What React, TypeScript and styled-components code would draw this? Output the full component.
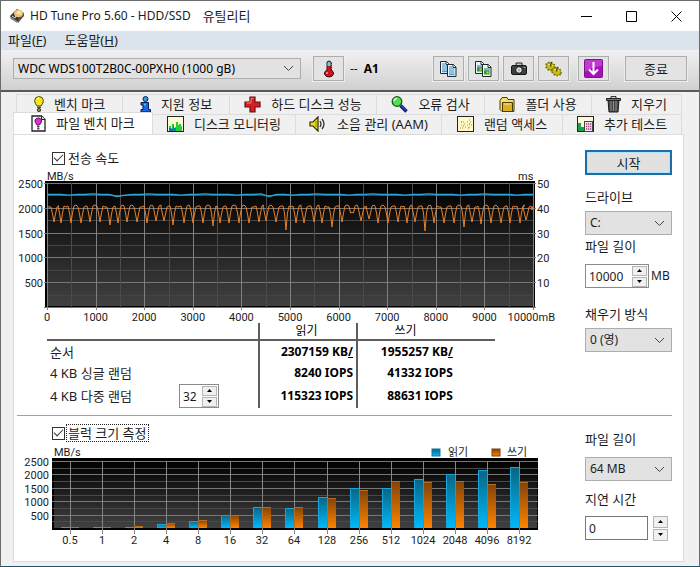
import React, { useId, useRef } from 'react';
import styled, { createGlobalStyle, css } from 'styled-components';

const Global = createGlobalStyle`
  *, *::before, *::after { box-sizing: border-box; }
  html, body { margin: 0; background: #f0f0f0; }
  body, button, input, select, table {
    font-family: "Noto Sans", "Noto Sans CJK KR", sans-serif;
    font-size: 12px;
    line-height: 16px;
    color: #1c1c1c;
  }
  svg { display: block; flex: none; }
`;

const Window = styled.main`
  min-height: 100vh;
  display: flex;
  flex-direction: column;
  background: #f0f0f0;
  border: 1px solid #6a6b6d;
  border-bottom-color: #245166;
`;

const TitleBar = styled.header`
  display: flex;
  align-items: center;
  height: 30px;
  padding-left: 8px;
  background: #fff;
`;

const Title = styled.h1`
  display: flex;
  gap: 12px;
  flex: 1;
  margin: 0 0 0 5px;
  font-size: 12px;
  font-weight: 400;
  white-space: nowrap;
  span { font-size: 13px; }
`;

const CaptionButton = styled.button`
  display: grid;
  place-items: center;
  width: 45px;
  height: 29px;
  padding: 0;
  border: 0;
  background: none;
`;

const MenuBar = styled.nav`
  display: flex;
  gap: 18px;
  height: 19px;
  padding: 0 7px;
  background: #dbe3ec;
`;

const MenuItem = styled.button`
  padding: 0;
  border: 0;
  background: none;
  font-size: 13px;
  line-height: 19px;
`;

const Toolbar = styled.div`
  display: flex;
  align-items: center;
  height: 42px;
  padding: 0 12px 3px;
  background: linear-gradient(#f1f1f1, #d0d0d0);
  border-bottom: 2px solid #58595b;
`;

const ToolButton = styled.button<{ $wide?: boolean }>`
  display: grid;
  place-items: center;
  width: ${(p) => (p.$wide ? 62 : 31)}px;
  height: 25px;
  padding: 0;
  background: #e3e3e3;
  border: 1px solid #adadad;
  outline: 1px solid #ededed;
  font-size: 13px;
`;

const ToolGroup = styled.div`
  display: flex;
  gap: 4px;
  margin-left: auto;
`;

const ToolActions = styled.div`
  display: flex;
  gap: 16px;
  margin-left: 9px;
`;

const Temperature = styled.output`
  margin-left: 6px;
  b { margin-left: 6px; color: #000; }
`;

const SelectBox = styled.div<{ $variant: 'device' | 'field' }>`
  display: grid;
  grid-template-columns: 1fr 18px;
  align-items: center;
  > select {
    grid-area: 1 / 1 / 2 / 3;
    appearance: none;
    width: 100%;
    height: 24px;
    padding: 0 18px 0 4px;
    border: 1px solid #adadad;
    border-radius: 0;
    background: #e2e2e2;
  }
  > svg { grid-area: 1 / 2; pointer-events: none; }
  ${(p) =>
    p.$variant === 'device' &&
    css`
      flex: 0 1 288px;
      margin-right: 12px;
      > select { height: 21px; color: #000; }
    `}
`;

const Body = styled.div`
  flex: 1;
  display: flex;
  flex-direction: column;
  padding: 2px 15px 4px 12px;
`;

const TabRow = styled.div<{ $columns: string; $inset?: boolean }>`
  display: grid;
  grid-template-columns: ${(p) => p.$columns};
  margin: ${(p) => (p.$inset ? '0 2px 0 3px' : '0 2px 0 0')};
`;

const Tab = styled.button<{ $active?: boolean }>`
  display: flex;
  align-items: center;
  justify-content: center;
  gap: 10px;
  height: ${(p) => (p.$active ? 22 : 20)}px;
  margin-top: ${(p) => (p.$active ? '-2px' : '0')};
  padding: 0 0 1px;
  border: 0;
  border-top: 1px solid #dcdcdc;
  border-right: 1px solid #dcdcdc;
  background: ${(p) => (p.$active ? '#fff' : '#f0f0f0')};
  font-size: 13px;
  line-height: 18px;
  white-space: nowrap;
  &:first-child { border-left: 1px solid #dcdcdc; }
`;

const Panel = styled.section`
  flex: 1;
  padding: 0 11px 8px 3px;
  background: #fff;
  border: 1px solid #dcdcdc;
`;

const Section = styled.section<{ $divided?: boolean }>`
  display: grid;
  grid-template-columns: minmax(0, 1fr) 87px;
  gap: 15px;
  padding-top: ${(p) => (p.$divided ? 9 : 15)}px;
  border-top: ${(p) => (p.$divided ? '1px solid #a2a2a2' : '0')};
  & + & { margin-top: 7px; }
`;

const Check = styled.label<{ $focused?: boolean }>`
  display: flex;
  align-items: center;
  gap: 1px;
  width: max-content;
  height: 16px;
  margin: 0 0 2px 35px;
  font-size: 13px;
  input {
    appearance: none;
    display: grid;
    place-items: center;
    width: 13px;
    height: 13px;
    margin: 0;
    border: 1px solid #333;
    background: #fff;
  }
  input:checked::after {
    content: '';
    width: 9px;
    height: 5px;
    margin-bottom: 3px;
    border: solid #333;
    border-width: 0 0 1px 1px;
    transform: rotate(-45deg);
  }
  span {
    padding: 0 1px;
    border: 1px dotted ${(p) => (p.$focused ? '#222' : 'transparent')};
  }
`;

const ChartSvg = styled.svg`
  width: 100%;
  height: auto;
  text { font-family: Roboto, "Noto Sans CJK KR", sans-serif; font-size: 11px; fill: #1c1c1c; }
`;

const Results = styled.table`
  width: 81%;
  margin-left: 30px;
  border-collapse: collapse;
  table-layout: fixed;
  th, td { height: 22px; padding: 0 3px 0 0; font-weight: 400; text-align: right; color: #000; }
  thead th { height: 17px; text-align: center; border-bottom: 2px solid #5c5d5c; }
  tbody th { text-align: left; padding-left: 3px; font-size: 12px; color: #222; }
  td { font-weight: 700; white-space: nowrap; }
  th:nth-child(2), td:nth-child(2) { border-left: 2px solid #5c5d5c; border-right: 2px solid #5c5d5c; }
  th:nth-child(3), td:nth-child(3) { padding-right: 42px; }
  col:nth-child(1) { width: 212px; }
  col:nth-child(2) { width: 98px; }
`;

const RowLabel = styled.div`
  display: flex;
  align-items: center;
  justify-content: space-between;
  padding-right: 36px;
  font-size: 13px;
`;

const Side = styled.div`
  display: flex;
  flex-direction: column;
`;

const StartButton = styled.button`
  height: 25px;
  padding: 0;
  border: 2px solid #1c6ea8;
  outline: 1px solid #b5e3f6;
  outline-offset: -3px;
  background: #e1e1e1;
  font-size: 13px;
`;

const FieldLabel = styled.label<{ $top: number; $bottom: number }>`
  margin: ${(p) => p.$top}px 0 ${(p) => p.$bottom}px;
  font-size: 13px;
  line-height: 16px;
`;

const UnitRow = styled.div`
  display: flex;
  align-items: center;
  gap: 2px;
  font-size: 12px;
`;

const SpinBox = styled.span<{ $width: number; $apart?: boolean }>`
  display: inline-flex;
  align-items: center;
  gap: ${(p) => (p.$apart ? 5 : 0)}px;
  height: 24px;
  padding-right: 1px;
  border: ${(p) => (p.$apart ? '0' : '1px solid #8a8a8a')};
  background: #fff;
  input {
    appearance: textfield;
    width: ${(p) => p.$width}px;
    height: ${(p) => (p.$apart ? '24px' : '20px')};
    padding: 0 3px;
    border: ${(p) => (p.$apart ? '1px solid #777' : '0')};
    background: none;
  }
  input::-webkit-inner-spin-button { appearance: none; margin: 0; }
  button { height: ${(p) => (p.$apart ? 12 : 10)}px; }
`;

const SpinButtons = styled.span`
  display: grid;
  gap: 1px;
`;

const SpinButton = styled.button`
  display: grid;
  place-items: center;
  width: 15px;
  padding: 0;
  border: 1px solid #b5b5b5;
  background: #f0f0f0;
`;

function Chevron() {
  return (
    <svg width="11" height="7" viewBox="0 0 11 7" fill="none" stroke="#444">
      <path d="M1 1l4.500 4.500L10 1" />
    </svg>
  );
}

function Select({ id, value, label, variant = 'field' }: { id?: string; value: string; label?: string; variant?: 'device' | 'field' }) {
  return (
    <SelectBox $variant={variant}>
      <select id={id} aria-label={label} defaultValue={value}>
        <option>{value}</option>
      </select>
      <Chevron />
    </SelectBox>
  );
}

function Spin({ id, value, width, label, apart }: { id?: string; value: number; width: number; label?: string; apart?: boolean }) {
  const field = useRef<HTMLInputElement>(null);
  return (
    <SpinBox $width={width} $apart={apart}>
      <input ref={field} id={id} type="number" aria-label={label} defaultValue={value} />
      <SpinButtons>
        <SpinButton type="button" aria-label="증가" onClick={() => field.current?.stepUp()}>
          <svg width="5" height="3" viewBox="0 0 5 3"><path d="M2.5 0L5 3H0z" /></svg>
        </SpinButton>
        <SpinButton type="button" aria-label="감소" onClick={() => field.current?.stepDown()}>
          <svg width="5" height="3" viewBox="0 0 5 3"><path d="M0 0h5L2.5 3z" /></svg>
        </SpinButton>
      </SpinButtons>
    </SpinBox>
  );
}

/* ---- icons ---- */

const DriveIcon = () => (
  <svg width="16" height="16" viewBox="0 0 16 16">
    <path d="M1 8L8 1l7 4-6 9-7-3z" fill="#3a3632" />
    <path d="M1 8l7 5v2l-6-4z" fill="#8d8d8d" />
    <path d="M8 13l7-8v3l-6 7z" fill="#5d5146" />
    <ellipse cx="9.5" cy="5.5" rx="4.5" ry="3.8" fill="#eec27a" />
    <ellipse cx="10" cy="4.8" rx="2.6" ry="1.8" fill="#fbe3b0" />
    <path d="M3 8l3 2 1-2" stroke="#ddd" fill="none" />
  </svg>
);

const ThermometerIcon = () => (
  <svg width="12" height="18" viewBox="0 0 12 18">
    <path d="M4 2q2-2 4 0v8q3 1.500 2.500 4Q9.500 17 6 17T1.500 14Q1 11.500 4 10z" fill="#d3131c" stroke="#3b1010" />
    <path d="M4.500 2.500q1.500-1.500 3 0V6h-3z" fill="#59d5e5" />
    <path d="M8.500 3v7" stroke="#222" strokeDasharray="1 1" />
    <path d="M4 12v2" stroke="#ff9c9c" strokeWidth="1.500" />
  </svg>
);

const CopyIcon = ({ picture }: { picture?: boolean }) => (
  <svg width="17" height="16" viewBox="0 0 17 16">
    {[[0.5, 0.5], [7.5, 3.5]].map(([x, y]) => (
      <g key={x} transform={`translate(${x} ${y})`}>
        <path d="M0 0h6l2.500 2.500V12H0z" fill="#eef6fb" stroke="#20262c" />
        <path d="M5.500 0v3h3" fill="#fff" stroke="#20262c" />
        {picture ? (
          <><path d="M1.500 4h5.500v6H1.500z" fill="#2f9a21" /><path d="M1.500 4h5.500v2H1.500z" fill="#6cb9dd" /><path d="M4 7h2v2H4z" fill="#b4e035" /></>
        ) : (
          <path d="M1.500 2.500h3M1.500 4.500h5.500M1.500 6.500h5.500M1.500 8.500h5.500M1.500 10.200h5.500" stroke="#2b8ecb" />
        )}
      </g>
    ))}
  </svg>
);

const CameraIcon = () => (
  <svg width="16" height="14" viewBox="0 0 16 14">
    <path d="M5 3.500V1h6v2.500" fill="#ccc" stroke="#222" />
    <rect x=".5" y="3.500" width="15" height="9" rx="1.500" fill="#3b4140" stroke="#161616" />
    <circle cx="8" cy="8" r="3.300" fill="#e5ebe8" stroke="#111" />
    <circle cx="8" cy="8" r="1.500" fill="#9fb8b1" />
    <path d="M12.500 5.500h2" stroke="#5bd35b" />
  </svg>
);

const GearsIcon = () => (
  <svg width="17" height="16" viewBox="0 0 17 16">
    {[[5.5, 5.5], [11.5, 10.5]].map(([x, y]) => (
      <g key={x} transform={`translate(${x} ${y}) rotate(30)`}>
        <ellipse rx="4.600" ry="3.600" fill="none" stroke="#6b6300" strokeWidth="2" strokeDasharray="1.600 1.300" />
        <ellipse rx="4.200" ry="3.200" fill="#cdbf12" stroke="#837900" strokeWidth=".6" />
        <path d="M-3-.5Q-1-2.500 2-1.800" stroke="#f3e95a" fill="none" />
        <path d="M-1.500-4.500L0 0" stroke="#4c4600" strokeWidth="1.300" />
      </g>
    ))}
  </svg>
);

const DownIcon = () => (
  <svg width="19" height="19" viewBox="0 0 19 19">
    <rect x=".5" y=".5" width="18" height="18" rx="1" fill="#a90fba" stroke="#7c1189" />
    <path d="M1 1h17v6Q9 7 1 13z" fill="#cf56dc" opacity=".6" />
    <path d="M9.500 3v11.500M5 10.500l4.500 4.500 4.500-4.500" fill="none" stroke="#fff" strokeWidth="2" />
  </svg>
);

const BulbIcon = () => (
  <svg width="10" height="16" viewBox="0 0 10 16">
    <path d="M3 10Q.5 7 .6 4.500 1 .6 5 .6t4.400 3.900Q9.500 7 7 10z" fill="#f1e71b" stroke="#4a4600" />
    <path d="M3 3q1-1.500 2-1.400" stroke="#fff" fill="none" />
    <path d="M3 10.500h4v1.500H3z" fill="#555" />
    <circle cx="5" cy="14" r="1.700" fill="#8d8a25" stroke="#222" strokeWidth=".8" />
  </svg>
);

const InfoIcon = () => (
  <svg width="11" height="17" viewBox="0 0 11 17">
    <circle cx="5.500" cy="3" r="2.500" fill="#2aa0e8" stroke="#0a2348" />
    <path d="M1 6.500h7.500v7H10.500v2.500H1v-2.500h2V9H1z" fill="#1765e8" stroke="#0a1c48" />
    <path d="M4 7.500h2v2H4z" fill="#54b8f2" />
  </svg>
);

const CrossIcon = () => (
  <svg width="17" height="17" viewBox="0 0 17 17">
    <path d="M6 1h5v5h5v5h-5v5H6v-5H1V6h5z" fill="#d81e23" stroke="#641012" strokeWidth="1.200" />
    <path d="M7 2.500h2.500M2.500 7H7V3" stroke="#ff7c78" fill="none" />
  </svg>
);

const MagnifierIcon = () => (
  <svg width="17" height="17" viewBox="0 0 17 17">
    <path d="M9.500 9.500l6 6" stroke="#101c66" strokeWidth="3.600" />
    <path d="M10 9.500l5 5" stroke="#2c3cdc" strokeWidth="1.500" />
    <circle cx="6" cy="5.500" r="4.800" fill="#4be04e" stroke="#155d1c" strokeWidth="1.300" />
    <path d="M3 5q.5-2.500 3-2.600" stroke="#dfffe0" strokeWidth="1.300" fill="none" />
  </svg>
);

const FolderIcon = () => (
  <svg width="16" height="17" viewBox="0 0 16 17">
    <path d="M1 4.500l2-3h5l1 2h6v12H3l-2-2z" fill="#f6dc67" stroke="#4b3c05" />
    <path d="M3.500 6.500h10v9h-10z" fill="#ddb024" stroke="#4b3c05" />
    <path d="M5 8h7" stroke="#fae891" />
  </svg>
);

const TrashIcon = () => (
  <svg width="15" height="17" viewBox="0 0 15 17">
    <path d="M2 4h11l-1 12H3z" fill="#444" stroke="#1d1d1d" />
    <path d="M5 5v10M7.500 5v10M10 5v10" stroke="#909090" />
    <path d="M.5 2.500h14v2H.5z" fill="#777" stroke="#222" />
    <path d="M5 2V.6h5V2" fill="none" stroke="#222" />
  </svg>
);

const FileBulbIcon = () => (
  <svg width="15" height="17" viewBox="0 0 15 17">
    <path d="M1 1h9.500L14 4.500V16H1z" fill="#fff" stroke="#222" strokeWidth="1.300" />
    <path d="M10.500 1v3.500H14" fill="#ddd" stroke="#222" />
    <path d="M6 10Q3.500 7 4 5q1-2 3.300-2t3.200 2Q11 7 8.500 10z" fill="#e12bd7" stroke="#520d52" />
    <path d="M6 11h2.500v1H6z" fill="#444" />
    <circle cx="7.300" cy="13.500" r="1.200" fill="#8e2991" />
  </svg>
);

const MonitorIcon = () => (
  <svg width="17" height="16" viewBox="0 0 17 16">
    <rect x=".5" y=".5" width="16" height="15" fill="#fffbd2" stroke="#222" />
    <path d="M2 15V10h2v2h1V8h2v5h1v-2h1V6h2v3h1V8h2v2h1v5z" fill="#20d13c" />
    <path d="M2 15V12h2v1h2v-3h1v2h2v3z" fill="#1178b5" />
  </svg>
);

const SpeakerIcon = () => (
  <svg width="18" height="16" viewBox="0 0 18 16">
    <path d="M1 6h3l5-5v14l-5-5H1z" fill="#eede22" stroke="#2e2b00" strokeWidth="1.200" />
    <path d="M11 5q2 3 0 6M13 3q4 5 0 10" fill="none" stroke="#333" strokeWidth="1.300" />
    <path d="M7 5v6" stroke="#938600" />
  </svg>
);

const RandomIcon = () => (
  <svg width="17" height="16" viewBox="0 0 17 16">
    <rect x=".5" y=".5" width="16" height="15" fill="#fff8c8" stroke="#222" />
    <path d="M6 6h1M12 4h1M13 6h1M4 9h1M7 8h1M10 9h1M8 11h1M5 12h1M12 11h1M3 12h1M14 9h1M10 6h1" stroke="#b8952a" />
    <path d="M4 6h1M11 12h1M6 10h1M12 8h1" stroke="#d0433d" />
  </svg>
);

const ExtraIcon = () => (
  <svg width="17" height="16" viewBox="0 0 17 16">
    <rect x=".5" y=".5" width="16" height="15" fill="#fff8d8" stroke="#222" />
    <path d="M1 15V7h3v4h3v4z" fill="#17a54c" />
    <rect x="7.500" y="5.500" width="8" height="10" fill="#e8e8f5" stroke="#444" />
    <path d="M9 8h5.500M9 10.500h5.500M9 13h5.500" stroke="#a34a80" strokeWidth="1.300" strokeDasharray="1.300 .7" />
  </svg>
);

/* ---- transfer rate chart ---- */

const RATE = { left: 30, right: 516, top: 15, bottom: 139 };

const writeDips: [number, number][] = [
  [40, 222], [47, 223], [57, 223], [67, 223], [76, 222], [86, 222], [96, 225], [104, 223], [113, 222], [123, 222], [133, 223],
  [142, 221], [150, 221], [159, 225], [170, 223], [179, 223], [189, 223], [199, 226], [206, 223], [215, 223], [225, 223],
  [235, 223], [245, 222], [252, 221], [262, 222], [272, 230], [282, 223], [290, 223], [300, 222], [308, 223], [318, 227],
  [328, 222], [338, 212], [347, 221], [355, 219], [364, 223], [374, 223], [384, 222], [393, 223], [401, 222], [411, 231],
  [420, 223], [430, 223], [440, 223], [450, 227], [458, 222], [467, 224], [477, 223], [487, 223], [496, 223], [506, 223], [512, 220],
].map(([x, y]) => [x - 3, y - 168]);

const writePath =
  'M30 39' +
  writeDips
    .map(([x, y], i) => {
      const high = 37 + (i % 3 === 0 ? 1 : 0);
      return `L${x - 3} ${high + 1}L${x - 1.5} ${high + 8}L${x} ${y}L${x + 1.5} ${high + 8}L${x + 3} ${high + 1}L${x + 5} ${i % 4 === 1 ? 39 : high}`;
    })
    .join('') +
  'L515 42L516 38';

const readPath =
  'M30 26.5' +
  Array.from({ length: 60 }, (_, i) => {
    const drop = i === 8 || i === 27 ? 2 : 0;
    const lift = [0, 0, 1, 0, 0, -1, 0][i % 7] * 0.6;
    return `L${36 + i * 8} ${26.5 + drop + lift}`;
  }).join('') +
  'L516 26.5';

function RateChart() {
  const id = useId();
  const { left, right, top, bottom } = RATE;
  const stepX = (right - left) / 20;
  const stepY = (bottom - top) / 10;
  const rows = Array.from({ length: 11 }, (_, i) => i);
  const cols = Array.from({ length: 21 }, (_, i) => i);
  return (
    <ChartSvg viewBox="0 0 553 155" role="img" aria-label="전송 속도">
      <defs>
        <linearGradient id={id} x1="0" y1="0" x2="0" y2="1">
          <stop offset="0" stopColor="#000" />
          <stop offset="1" stopColor="#414141" />
        </linearGradient>
      </defs>
      <rect x={left - 2} y={top - 2} width={right - left + 4} height={bottom - top + 3} fill="#000" />
      <rect x={left} y={top} width={right - left} height={bottom - top - 1} fill={`url(#${id})`} />
      {rows.map((i) => (
        <path key={i} d={`M${i % 2 ? left : left - 3} ${Math.round(top + i * stepY) + 0.5}H${i % 2 ? right : right + 3}`} stroke={i % 2 ? '#444' : '#777'} />
      ))}
      {cols.map((i) => (
        <path key={i} d={`M${Math.round(left + i * stepX) + 0.5} ${top}V${i % 2 ? bottom + 1 : bottom + 3}`} stroke={i % 2 ? '#4b4b4b' : '#808080'} />
      ))}
      <path d={writePath} fill="none" stroke="#e8812a" strokeLinejoin="bevel" />
      <path d={readPath} fill="none" stroke="#2ba6dc" strokeWidth="1.400" />
      <text x="30" y="12">MB/s</text>
      <text x="501" y="12">ms</text>
      {[2500, 2000, 1500, 1000, 500].map((v, i) => (
        <text key={v} x="26" y={top + 5 + i * stepY * 2} textAnchor="end">{v}</text>
      ))}
      {[50, 40, 30, 20, 10].map((v, i) => (
        <text key={v} x="520" y={top + 5 + i * stepY * 2}>{v}</text>
      ))}
      {cols.filter((i) => i % 2 === 0 && i < 20).map((i) => (
        <text key={i} x={left + i * stepX} y="153" textAnchor="middle">{i * 500}</text>
      ))}
      <text x="538" y="153" textAnchor="end">10000mB</text>
    </ChartSvg>
  );
}

/* ---- block size chart ---- */

const blocks: [string, number, number][] = [
  ['0.5', 20, 12], ['1', 25, 20], ['2', 30, 70], ['4', 160, 190], ['8', 260, 310], ['16', 490, 490], ['32', 780, 780],
  ['64', 750, 780], ['128', 1150, 1120], ['256', 1500, 1410], ['512', 1500, 1740], ['1024', 1810, 1700],
  ['2048', 2010, 1740], ['4096', 2180, 1660], ['8192', 2260, 1700],
];

function BlockChart() {
  const id = useId();
  const left = 35;
  const right = 520;
  const top = 18;
  const base = 85;
  const scale = (base - top) / 2500;
  const center = (i: number) => Math.round(53 + i * 32.07);
  return (
    <ChartSvg viewBox="0 0 553 106" role="img" aria-label="블럭 크기 측정">
      <defs>
        <linearGradient id={`${id}bg`} x1="0" y1="0" x2="0" y2="1">
          <stop offset="0" stopColor="#000" /><stop offset="1" stopColor="#414141" />
        </linearGradient>
        <linearGradient id={`${id}r`} x1="0" y1="0" x2="0" y2="1">
          <stop offset="0" stopColor="#096482" /><stop offset="1" stopColor="#00bafc" />
        </linearGradient>
        <linearGradient id={`${id}w`} x1="0" y1="0" x2="0" y2="1">
          <stop offset="0" stopColor="#814307" /><stop offset="1" stopColor="#ff8400" />
        </linearGradient>
      </defs>
      <rect x={left} y={top - 3} width={right - left + 1} height={base - top + 5} fill="#000" />
      <rect x={left + 2} y={top} width={right - left - 2} height={base - top} fill={`url(#${id}bg)`} />
      {Array.from({ length: 10 }, (_, i) => (
        <path key={i} d={`M${left} ${Math.round(top + (i * (base - top)) / 10) + 0.5}H${right + 1}`} stroke={i % 2 ? '#4a4a4a' : '#777'} />
      ))}
      {blocks.map(([name, read, write], i) => {
        const x = center(i);
        return (
          <g key={name}>
            <path d={`M${x + 0.5} ${top}V${base + 6}`} stroke="#858585" />
            {[read, write].map((v, k) => {
              const h = Math.max(1, Math.round(v * scale));
              const bx = x - 9 + k * 9;
              return (
                <g key={k}>
                  <rect x={bx} y={base - h} width="9" height={h} fill={`url(#${id}${k ? 'w' : 'r'})`} />
                  <path d={`M${bx + 0.5} ${base}V${base - h + 0.5}H${bx + 9}`} fill="none" stroke={k ? '#b86b22' : '#17a6dc'} />
                </g>
              );
            })}
            <text x={x} y="101" textAnchor="middle">{name}</text>
          </g>
        );
      })}
      <text x="37" y="13">MB/s</text>
      {[2500, 2000, 1500, 1000, 500].map((v, i) => (
        <text key={v} x="32" y={top + 5 + (i * (base - top)) / 5} textAnchor="end">{v}</text>
      ))}
      <rect x="415" y="6" width="8" height="7" fill={`url(#${id}r)`} stroke="#17759a" />
      <text x="431" y="13">읽기</text>
      <rect x="475" y="6" width="8" height="7" fill={`url(#${id}w)`} stroke="#7b430d" />
      <text x="490" y="13">쓰기</text>
    </ChartSvg>
  );
}

const upperTabs = [
  ['벤치 마크', BulbIcon], ['지원 정보', InfoIcon], ['하드 디스크 성능', CrossIcon],
  ['오류 검사', MagnifierIcon], ['폴더 사용', FolderIcon], ['지우기', TrashIcon],
] as const;

const lowerTabs = [
  ['파일 벤치 마크', FileBulbIcon], ['디스크 모니터링', MonitorIcon], ['소음 관리 (AAM)', SpeakerIcon],
  ['랜덤 액세스', RandomIcon], ['추가 테스트', ExtraIcon],
] as const;

const tools = [
  ['텍스트 복사', <CopyIcon />], ['그림 복사', <CopyIcon picture />], ['화면 저장', <CameraIcon />], ['설정', <GearsIcon />],
] as const;

export default function App() {
  return (
    <Window>
      <Global />
      <TitleBar>
        <DriveIcon />
        <Title>HD Tune Pro 5.60 - HDD/SSD <span>유틸리티</span></Title>
        <CaptionButton aria-label="최소화">
          <svg width="11" height="11" stroke="#000"><path d="M0 5.500h11" /></svg>
        </CaptionButton>
        <CaptionButton aria-label="최대화">
          <svg width="11" height="11" stroke="#000" fill="none"><path d="M.5.5h10v10H.5z" /></svg>
        </CaptionButton>
        <CaptionButton aria-label="닫기">
          <svg width="11" height="11" stroke="#000"><path d="M.5.5l10 10M10.500.5l-10 10" /></svg>
        </CaptionButton>
      </TitleBar>
      <MenuBar>
        <MenuItem>파일(<u>F</u>)</MenuItem>
        <MenuItem>도움말(<u>H</u>)</MenuItem>
      </MenuBar>
      <Toolbar>
        <Select variant="device" label="드라이브 선택" value="WDC WDS100T2B0C-00PXH0 (1000 gB)" />
        <ToolButton aria-label="온도"><ThermometerIcon /></ToolButton>
        <Temperature>--<b>A1</b></Temperature>
        <ToolGroup>
          {tools.map(([name, icon]) => (
            <ToolButton key={name} aria-label={name}>{icon}</ToolButton>
          ))}
        </ToolGroup>
        <ToolActions>
          <ToolButton aria-label="내려받기"><DownIcon /></ToolButton>
          <ToolButton $wide>종료</ToolButton>
        </ToolActions>
      </Toolbar>
      <Body>
        <TabRow role="tablist" $inset $columns="107fr 107fr 147fr 108fr 107fr 90fr">
          {upperTabs.map(([name, Icon]) => (
            <Tab key={name} role="tab"><Icon />{name}</Tab>
          ))}
        </TabRow>
        <TabRow role="tablist" $columns="140fr 143fr 146fr 121fr 119fr">
          {lowerTabs.map(([name, Icon], i) => (
            <Tab key={name} role="tab" aria-selected={i === 0} $active={i === 0}><Icon />{name}</Tab>
          ))}
        </TabRow>
        <Panel>
          <Section>
            <div>
              <Check><input type="checkbox" defaultChecked /><span>전송 속도</span></Check>
              <RateChart />
              <Results>
                <colgroup><col /><col /><col /></colgroup>
                <thead>
                  <tr><th /><th scope="col">읽기</th><th scope="col">쓰기</th></tr>
                </thead>
                <tbody>
                  <tr><th scope="row"><RowLabel>순서</RowLabel></th><td>2307159 KB<u>/</u></td><td>1955257 KB<u>/</u></td></tr>
                  <tr><th scope="row"><RowLabel>4 KB 싱글 랜덤</RowLabel></th><td>8240 IOPS</td><td>41332 IOPS</td></tr>
                  <tr>
                    <th scope="row"><RowLabel>4 KB 다중 랜덤<Spin value={32} width={22} label="4 KB 다중 랜덤" /></RowLabel></th>
                    <td>115323 IOPS</td><td>88631 IOPS</td>
                  </tr>
                </tbody>
              </Results>
            </div>
            <Side>
              <StartButton>시작</StartButton>
              <FieldLabel htmlFor="drive" $top={14} $bottom={6}>드라이브</FieldLabel>
              <Select id="drive" value="C:" />
              <FieldLabel htmlFor="length" $top={3} $bottom={10}>파일 길이</FieldLabel>
              <UnitRow><Spin id="length" value={10000} width={46} />MB</UnitRow>
              <FieldLabel htmlFor="fill" $top={18} $bottom={6}>채우기 방식</FieldLabel>
              <Select id="fill" value="0 (영)" />
            </Side>
          </Section>
          <Section $divided>
            <div>
              <Check $focused><input type="checkbox" defaultChecked /><span>블럭 크기 측정</span></Check>
              <BlockChart />
            </div>
            <Side>
              <FieldLabel htmlFor="block-length" $top={6} $bottom={10}>파일 길이</FieldLabel>
              <Select id="block-length" value="64 MB" />
              <FieldLabel htmlFor="delay" $top={10} $bottom={9}>지연 시간</FieldLabel>
              <Spin id="delay" value={0} width={63} apart />
            </Side>
          </Section>
        </Panel>
      </Body>
    </Window>
  );
}
